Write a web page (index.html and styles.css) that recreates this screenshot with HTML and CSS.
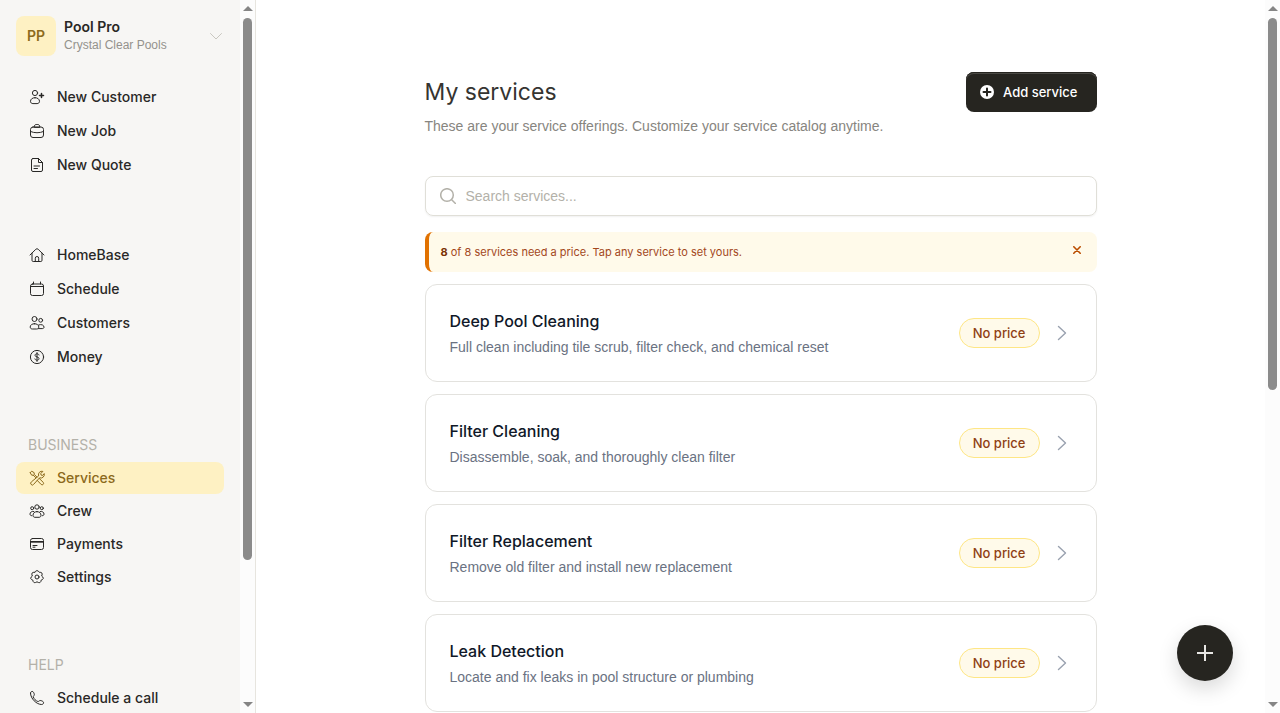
FILE: index.html
```html
<!DOCTYPE html>
<html lang="en">
<head>
  <meta charset="UTF-8">
  <meta name="viewport" content="width=device-width, initial-scale=1.0">
  <title>My services - Pool Pro</title>
  <link rel="stylesheet" href="styles.css">
</head>
<body>
  <div class="app">
    <aside class="sidebar">
      <button class="account" type="button">
        <span class="avatar">PP</span>
        <span class="account-text">
          <strong>Pool Pro</strong>
          <small>Crystal Clear Pools</small>
        </span>
        <svg class="caret" viewBox="0 0 12 12"><path d="M0.500 3.500 6 9l5.500-5.500"/></svg>
      </button>

      <nav class="menu menu-create">
        <a href="#">
          <svg viewBox="0 0 16 16"><circle cx="6" cy="4" r="2.600"/><path d="M6 8.700c-2.700 0-4.500 1.500-4.500 3.600 0 1.500 1.100 2.300 2.400 2.300h4.200c1.300 0 2.400-.8 2.400-2.300 0-2.100-1.800-3.600-4.500-3.600z"/><path d="M12.500 4.400v4M10.500 6.400h4" stroke-width="1.500"/></svg>
          New Customer
        </a>
        <a href="#">
          <svg viewBox="0 0 16 16"><rect x="1.500" y="4" width="13" height="10.500" rx="2.500"/><path d="M5.200 4c0-1.600.8-2.500 2-2.500h1.600c1.200 0 2 .9 2 2.500zM1.500 8.500c3.800 1.700 9.200 1.700 13 0"/></svg>
          New Job
        </a>
        <a href="#">
          <svg viewBox="0 0 16 16"><path d="M4 1.500h5.500l4 4V13a1.500 1.500 0 0 1-1.500 1.500H4A1.500 1.500 0 0 1 2.500 13V3A1.500 1.500 0 0 1 4 1.500zM9.500 1.500v4h4M5 9h5.500M5 11.500h3.500"/></svg>
          New Quote
        </a>
      </nav>

      <nav class="menu menu-main">
        <a href="#">
          <svg viewBox="0 0 16 16"><path d="M1 8l5.800-5.700a1.700 1.700 0 0 1 2.400 0L15 8M3 6.200v7.100a1.200 1.200 0 0 0 1.200 1.200h7.600a1.200 1.200 0 0 0 1.200-1.200V6.200M6.300 14.500v-3.300a1.700 1.700 0 0 1 3.400 0v3.300"/></svg>
          HomeBase
        </a>
        <a href="#">
          <svg viewBox="0 0 16 16"><rect x="1.500" y="3" width="13" height="11.500" rx="2"/><path d="M1.500 5.500h13M4.500 1v2M11.500 1v2"/></svg>
          Schedule
        </a>
        <a href="#">
          <svg viewBox="0 0 16 16"><circle cx="5.500" cy="4" r="2.500"/><circle cx="11.700" cy="5.300" r="1.900"/><path d="M5.500 8.700c-2.500 0-4.300 1.400-4.300 3.300 0 1.400 1 2 2.200 2h4.200c1.300 0 2.200-.6 2.200-2 0-1.900-1.800-3.300-4.300-3.300zM9.500 10c3-1.200 5.500.200 5.500 2.100 0 1-.7 1.500-1.700 1.500H9.500"/></svg>
          Customers
        </a>
        <a href="#">
          <svg viewBox="0 0 16 16"><circle cx="8" cy="8" r="6.600"/><path d="M10 6c-.2-.8-1-1.200-2-1.200s-2 .5-2 1.500C6 8.500 10 7.300 10 9.600c0 1-.9 1.600-2 1.600s-1.900-.5-2.100-1.300M8 3.600v8.800"/></svg>
          Money
        </a>
      </nav>

      <h2 class="menu-title">BUSINESS</h2>
      <nav class="menu menu-small">
        <a class="active" href="#">
          <svg viewBox="0 0 16 16"><path d="M1.200 2.700 2.700 1.200 5.200 2.700v1.600l2.600 2.600M4.300 5.200H2.700L1.200 2.700M4.300 5.200l2.500 2.500M10.200 8.400l4.100 4a1.500 1.500 0 0 1-2.100 2.100L8.200 10.400M9.500 5.600a3.500 3.500 0 0 1 4.400-4.200l-2.100 2.100.3 1.600 1.600.3 1.500-1.800a3.500 3.500 0 0 1-4.600 4.200l-6 6.600a1.600 1.600 0 0 1-2.500 0 1.600 1.600 0 0 1 .1-2.400z"/></svg>
          Services
        </a>
        <a href="#">
          <svg viewBox="0 0 16 16"><circle cx="8" cy="4" r="2.200"/><circle cx="3.200" cy="5.200" r="1.500"/><circle cx="12.800" cy="5.200" r="1.500"/><path d="M8 8.600c-2.400 0-4 1.600-4 3.700 0 1.400.9 2 2 2h4c1.100 0 2-.6 2-2 0-2.100-1.600-3.700-4-3.700zM4.800 8.500C2.700 8 1 9.300 1 11c0 1.200.7 1.700 1.700 1.700M11.200 8.500c2.100-.5 3.800.8 3.800 2.500 0 1.200-.7 1.700-1.700 1.700"/></svg>
          Crew
        </a>
        <a href="#">
          <svg viewBox="0 0 16 16"><rect x="1.500" y="2.500" width="13" height="11" rx="2"/><path d="M1.500 5.500h13M1.500 6.200h13M4 9.500h4M4 11.200h2"/></svg>
          Payments
        </a>
        <a href="#">
          <svg viewBox="0 0 16 16"><circle cx="8" cy="8" r="2"/><path d="M6.600 2.200q1.400-1.400 2.800 0l.9 1.100 1.500.100q1.900.4 1.300 2.500L12.600 7l1.200 1q1.200 1.500-.400 2.600l-1.300.6-.3 1.400q-.8 1.700-2.400.9L8 12.800l-1.400.7q-1.600.8-2.400-.9l-.3-1.400-1.300-.6Q1 9.500 2.200 8l1.200-1-.5-1.100q-.6-2.100 1.300-2.500l1.500-.1z"/></svg>
          Settings
        </a>
      </nav>

      <h2 class="menu-title">HELP</h2>
      <nav class="menu menu-small">
        <a href="#">
          <svg viewBox="0 0 16 16"><path d="M1.500 3.200c0-1 .8-1.800 1.700-1.800 1.200 0 2.100 2.200 2.100 3.300 0 1-1.200 1.300-1 2.200.5 1.900 2.600 4 4.600 4.600 1 .2 1.300-1 2.300-1 1.100 0 3.400.9 3.400 2.200 0 1-.9 1.800-1.900 1.800C7.500 14.500 1.500 8.600 1.500 3.200z"/></svg>
          Schedule a call
        </a>
      </nav>
    </aside>
    <div class="scrollbar scrollbar-side" aria-hidden="true">
      <span class="up"></span>
      <div class="track"><div class="thumb"></div></div>
      <span class="down"></span>
    </div>

    <main class="content">
      <div class="column">
        <header class="page-header">
          <div>
            <h1>My services</h1>
            <p>These are your service offerings. Customize your service catalog anytime.</p>
          </div>
          <button class="add-btn" type="button">
            <svg viewBox="0 0 14 14"><circle cx="7" cy="7" r="7"/><path d="M7 3.500v7M3.500 7h7"/></svg>
            Add service
          </button>
        </header>

        <label class="search">
          <svg viewBox="0 0 16 16"><circle cx="7" cy="7" r="6.300" stroke-width="1.500"/><path d="M11.700 11.700l3.800 3.800" stroke-width="1.500"/></svg>
          <input type="search" placeholder="Search services..." aria-label="Search services">
        </label>

        <div class="notice">
          <p><strong>8</strong> of 8 services need a price. Tap any service to set yours.</p>
          <button type="button" aria-label="Dismiss">
            <svg viewBox="0 0 10 10"><path d="M1 1l8 8M9 1 1 9"/></svg>
          </button>
        </div>

        <div class="services">
          <a class="service" href="#">
            <span class="service-text">
              <strong>Deep Pool Cleaning</strong>
              <span>Full clean including tile scrub, filter check, and chemical reset</span>
            </span>
            <span class="badge">No price</span>
            <svg class="arrow" viewBox="0 0 10 16"><path d="M1.500 1.500 8.500 8l-7 6.500" stroke-width="1.400"/></svg>
          </a>
          <a class="service" href="#">
            <span class="service-text">
              <strong>Filter Cleaning</strong>
              <span>Disassemble, soak, and thoroughly clean filter</span>
            </span>
            <span class="badge">No price</span>
            <svg class="arrow" viewBox="0 0 10 16"><path d="M1.500 1.500 8.500 8l-7 6.500" stroke-width="1.400"/></svg>
          </a>
          <a class="service" href="#">
            <span class="service-text">
              <strong>Filter Replacement</strong>
              <span>Remove old filter and install new replacement</span>
            </span>
            <span class="badge">No price</span>
            <svg class="arrow" viewBox="0 0 10 16"><path d="M1.500 1.500 8.500 8l-7 6.500" stroke-width="1.400"/></svg>
          </a>
          <a class="service" href="#">
            <span class="service-text">
              <strong>Leak Detection</strong>
              <span>Locate and fix leaks in pool structure or plumbing</span>
            </span>
            <span class="badge">No price</span>
            <svg class="arrow" viewBox="0 0 10 16"><path d="M1.500 1.500 8.500 8l-7 6.500" stroke-width="1.400"/></svg>
          </a>
        </div>
      </div>
    </main>
    <div class="scrollbar" aria-hidden="true">
      <span class="up"></span>
      <div class="track"><div class="thumb"></div></div>
      <span class="down"></span>
    </div>
  </div>

  <button class="fab" type="button" aria-label="Create">
    <svg viewBox="0 0 16 16"><path d="M8 0v16M0 8h16"/></svg>
  </button>
</body>
</html>
```
FILE: styles.css
```css
* {
  box-sizing: border-box;
}
body {
  margin: 0;
  font-family: Inter, "Liberation Sans", sans-serif;
  font-size: 14px;
  line-height: 20px;
  color: #292826;
  background-color: #fff;
}
h1, h2, p {
  margin: 0;
  font-weight: 400;
}
a {
  color: inherit;
  text-decoration: none;
}
button, input {
  font: inherit;
  color: inherit;
  border: none;
  background: none;
  padding: 0;
}
button {
  cursor: pointer;
}
svg {
  display: block;
  flex: none;
  fill: none;
  stroke: currentColor;
  stroke-linecap: round;
  stroke-linejoin: round;
}
.app {
  display: flex;
  height: 100vh;
}

/* sidebar */
.sidebar {
  flex: none;
  width: 240px;
  overflow-y: auto;
  scrollbar-width: none;
  padding: 16px 16px 180px;
  background-color: #f7f6f4;
}
.account {
  display: flex;
  align-items: center;
  gap: 8px;
  width: 100%;
  text-align: left;
}
.avatar {
  display: grid;
  place-items: center;
  width: 40px;
  height: 40px;
  border-radius: 8px;
  background-color: #fef1c3;
  color: #8c6a1c;
  font-weight: 600;
}
.account-text {
  flex: 1;
}
.account-text strong,
.account-text small {
  display: block;
  line-height: 18px;
}
.account-text strong {
  font-weight: 600;
}
.account-text small {
  font-family: "Liberation Sans", Arial, sans-serif;
  font-size: 12px;
  color: #94928c;
}
.caret {
  width: 12px;
  height: 12px;
  margin-right: 2px;
  color: #c9c7c0;
}
.menu {
  display: flex;
  flex-direction: column;
  gap: 2px;
}
.menu a {
  display: flex;
  align-items: center;
  gap: 12px;
  height: 32px;
  padding: 0 13px;
  border-radius: 8px;
  font-weight: 500;
}
.menu svg {
  width: 16px;
  height: 16px;
}
.menu-create {
  margin-top: 25px;
}
.menu-main {
  margin-top: 58px;
}
.menu-small {
  gap: 1px;
}
.menu .active {
  background-color: #fef1c3;
  color: #8c6a1c;
}
.menu-title {
  margin: 62px 12px 7px;
  font-size: 14px;
  line-height: 20px;
  color: #b3b1a9;
}

/* scrollbars */
.scrollbar {
  flex: none;
  display: flex;
  flex-direction: column;
  align-items: center;
  justify-content: space-between;
  width: 15px;
  padding: 6px 0;
  background-color: #fcfcfc;
}
.scrollbar-side {
  width: 16px;
  border-right: 1px solid #e7e5df;
}
.scrollbar span {
  border: 5px solid transparent;
}
.scrollbar .up {
  border-top: none;
  border-bottom-color: #858585;
}
.scrollbar .down {
  border-bottom: none;
  border-top-color: #858585;
}
.track {
  flex: 1;
  width: 9px;
  margin: 7px 0;
}
.thumb {
  height: 55%;
  border-radius: 5px;
  background-color: #8b8b8b;
}
.scrollbar-side .thumb {
  height: 80%;
}

/* page */
.content {
  flex: 1;
  min-width: 0;
  overflow-y: auto;
  scrollbar-width: none;
  padding: 72px 24px 586px;
}
.column {
  max-width: 672px;
  margin: 0 auto;
}
.page-header {
  display: flex;
  align-items: flex-start;
  justify-content: space-between;
}
.page-header h1 {
  font-size: 23px;
  line-height: 40px;
  color: #353431;
}
.page-header p {
  margin-top: 4px;
  font-family: "Liberation Sans", Arial, sans-serif;
  color: #878580;
}
.add-btn {
  display: flex;
  align-items: center;
  gap: 9px;
  height: 40px;
  padding: 0 19px 0 14px;
  border-radius: 8px;
  background-color: #262520;
  box-shadow: inset 0 1px 0 #262520, inset 0 2px 0 #4a4944;
  color: #fff;
  font-size: 13px;
  font-weight: 500;
}
.add-btn svg {
  width: 14px;
  height: 14px;
}
.add-btn circle {
  fill: #fff;
  stroke: none;
}
.add-btn path {
  stroke: #262520;
  stroke-width: 2;
}
.search {
  display: flex;
  align-items: center;
  gap: 10px;
  height: 40px;
  margin-top: 40px;
  padding: 0 14px;
  border: 1px solid #e0dfd8;
  border-radius: 8px;
  box-shadow: 0 1px 2px rgba(0, 0, 0, 0.06);
}
.search svg {
  width: 16px;
  height: 16px;
  color: #b3b1a9;
}
.search input {
  flex: 1;
  outline: none;
  font-family: "Liberation Sans", Arial, sans-serif;
}
.search input::placeholder {
  color: #b3b1a9;
}
.notice {
  display: flex;
  justify-content: space-between;
  height: 40px;
  margin-top: 16px;
  padding: 10px 16px 10px 12px;
  border-left: 4px solid #e17100;
  border-radius: 8px;
  background-color: #fffaea;
  color: #a3481c;
  font-size: 11px;
}
.notice strong {
  font-weight: 700;
  color: #7b3306;
}
.notice button {
  height: 16px;
}
.notice svg {
  width: 8px;
  height: 8px;
  stroke-width: 2;
  color: #bb4d00;
}
.services {
  display: flex;
  flex-direction: column;
  gap: 12px;
  margin-top: 12px;
}
.service {
  display: flex;
  align-items: center;
  height: 98px;
  padding: 0 29px 0 24px;
  border: 1px solid #e3e2de;
  border-radius: 12px;
}
.service-text {
  flex: 1;
}
.service-text strong,
.service-text span {
  display: block;
}
.service-text strong {
  font-size: 16px;
  line-height: 24px;
  font-weight: 500;
  color: #101828;
}
.service-text span {
  margin-top: 4px;
  font-family: "Liberation Sans", Arial, sans-serif;
  color: #6a7282;
}
.badge {
  padding: 4px 13px;
  border: 1px solid #fee685;
  border-radius: 15px;
  background-color: #fffaea;
  color: #8f3f14;
  font-size: 13px;
  font-weight: 500;
}
.arrow {
  width: 10px;
  height: 16px;
  margin-left: 17px;
  color: #99a1af;
}
.fab {
  position: fixed;
  right: 47px;
  bottom: 32px;
  display: grid;
  place-items: center;
  width: 56px;
  height: 56px;
  border-radius: 50%;
  background-color: #262520;
  box-shadow: 0 8px 20px rgba(0, 0, 0, 0.15);
  color: #e8e7e4;
}
.fab svg {
  width: 16px;
  height: 16px;
  stroke-width: 2;
  stroke-linecap: butt;
}
```
